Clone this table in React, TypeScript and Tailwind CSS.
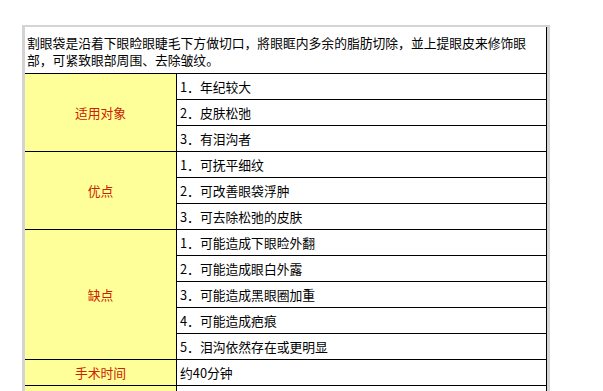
const groups = [
  { label: "适用对象", items: ["1．年纪较大", "2．皮肤松弛", "3．有泪沟者"] },
  { label: "优点", items: ["1．可抚平细纹", "2．可改善眼袋浮肿", "3．可去除松弛的皮肤"] },
  {
    label: "缺点",
    items: [
      "1．可能造成下眼睑外翻",
      "2．可能造成眼白外露",
      "3．可能造成黑眼圈加重",
      "4．可能造成疤痕",
      "5．泪沟依然存在或更明显",
    ],
  },
  { label: "手术时间", items: ["约40分钟"] },
  { label: "", items: [""] },
];

export default function App() {
  return (
    <main className="h-[391px] w-[603px] overflow-hidden bg-white font-['Noto_Sans_CJK_SC',sans-serif] text-[12.8px] text-black">
      <div className="ml-[22px] mt-[25px] w-[528px] border-x-[3px] border-t-2 border-[#d4d4d4]">
        <div className="border-r border-black">
          {/* intro text */}
          <div className="h-[47px] border-b border-black pl-[2px] pt-[7px] leading-[17px]">
            割眼袋是沿着下眼睑眼睫毛下方做切口，將眼眶内多余的脂肪切除，並上提眼皮来修饰眼
            <br />
            部，可紧致眼部周围、去除皱纹。
          </div>

          {groups.map((g, gi) => (
            <div key={gi} className="flex border-b border-black">
              <div className="flex w-[152px] shrink-0 items-center justify-center border-r border-black bg-[#ffff99] text-[#cc2200]">
                {g.label}
              </div>
              <div className="flex flex-1 flex-col">
                {g.items.map((item, i) => (
                  <div
                    key={i}
                    className={[
                      "flex items-center pl-[3px]",
                      i < g.items.length - 1 ? "h-[26px] border-b border-black" : "h-[25px]",
                    ].join(" ")}
                  >
                    {item}
                  </div>
                ))}
              </div>
            </div>
          ))}
        </div>
      </div>
    </main>
  );
}
